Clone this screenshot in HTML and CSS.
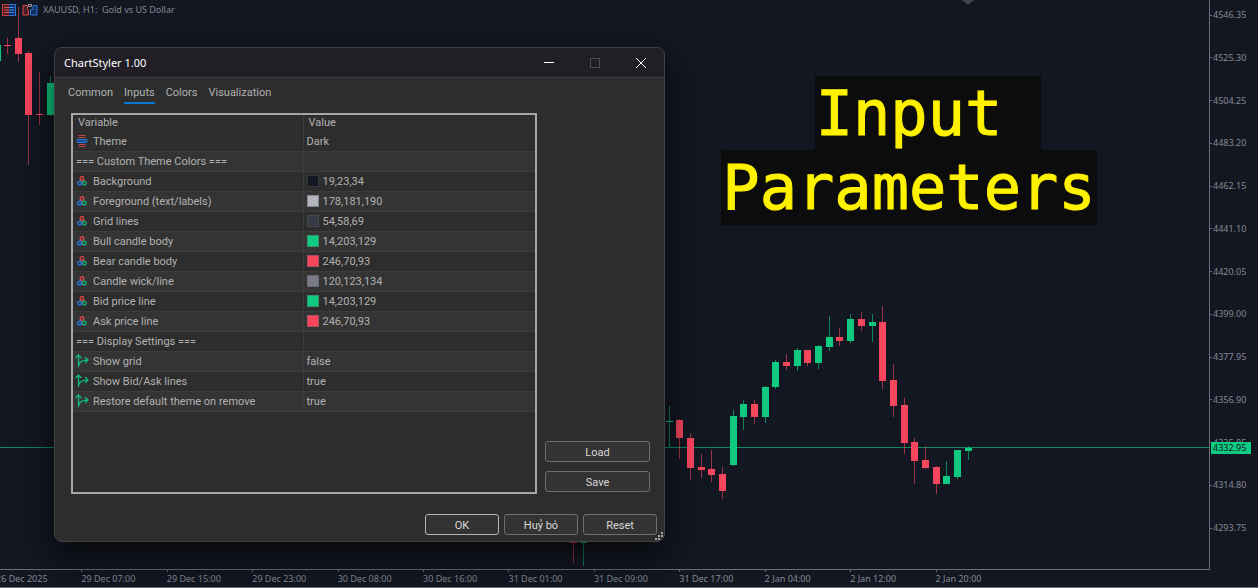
FILE: index.html
```html
<!DOCTYPE html>
<html lang="en">
<head>
    <meta charset="UTF-8">
    <meta name="viewport" content="width=device-width, initial-scale=1.0">
    <title>ChartStyler - Input Parameters</title>
    <link rel="stylesheet" href="styles.css">
</head>
<body>
    <main class="terminal">
        <section class="chart">
            <svg id="candles" viewBox="0 0 1209 569" preserveAspectRatio="none" aria-hidden="true">
                <line class="bid-line" x1="0" y1="447.5" x2="1209" y2="447.5"/>
                <path class="shift-mark" d="M962 0h12l-6 5z"/>
            </svg>
            <header class="chart-title">
                <svg width="16" height="12" viewBox="0 0 16 12" aria-hidden="true">
                    <path d="M8 .5H1.500v11H8" fill="#4a1f2b" stroke="#c9403f"/>
                    <path d="M8 .5h6.500v11H8" fill="#0f3060" stroke="#2f78d8"/>
                    <path d="M3 3.500h5M3 6h5M3 8.500h5" stroke="#e0524d"/>
                    <path d="M8 3.500h5M8 6h5M8 8.500h5" stroke="#3b8bee"/>
                </svg>
                <svg width="16" height="12" viewBox="0 0 16 12" aria-hidden="true">
                    <path d="M1 1.500h4.500v4l1 1.500v4H1z" fill="#4a1f2b" stroke="#d84a45"/>
                    <path d="M15 1.500h-4v4H8.500V11H15z" fill="#0f3060" stroke="#2f78d8"/>
                    <path d="M6.500.5h3v2h-3z" fill="none" stroke="#9a9ba3"/>
                </svg>
                <span>XAUUSD, H1:&nbsp; Gold vs US Dollar</span>
            </header>
            <h1 class="callout"><span>Input Parameters</span></h1>
        </section>

        <aside class="price-axis">
            <ul>
                <li>4546.35</li>
                <li>4525.30</li>
                <li>4504.25</li>
                <li>4483.20</li>
                <li>4462.15</li>
                <li>4441.10</li>
                <li>4420.05</li>
                <li>4399.00</li>
                <li>4377.95</li>
                <li>4356.90</li>
                <li>4335.85</li>
                <li>4314.80</li>
                <li>4293.75</li>
            </ul>
            <span class="bid-price">4332.95</span>
        </aside>

        <footer class="time-axis">
            <ul>
                <li>26 Dec 2025</li>
                <li>29 Dec 07:00</li>
                <li>29 Dec 15:00</li>
                <li>29 Dec 23:00</li>
                <li>30 Dec 08:00</li>
                <li>30 Dec 16:00</li>
                <li>31 Dec 01:00</li>
                <li>31 Dec 09:00</li>
                <li>31 Dec 17:00</li>
                <li>2 Jan 04:00</li>
                <li>2 Jan 12:00</li>
                <li>2 Jan 20:00</li>
            </ul>
        </footer>
    </main>

    <div class="dialog" role="dialog" aria-labelledby="dialog-title">
        <div class="titlebar">
            <h2 id="dialog-title">ChartStyler 1.00</h2>
            <button class="win-btn" aria-label="Minimize">
                <svg width="12" height="12" viewBox="0 0 12 12"><path d="M1 5.500h10"/></svg>
            </button>
            <button class="win-btn" aria-label="Maximize" disabled>
                <svg width="12" height="12" viewBox="0 0 12 12"><rect x="1.500" y="1.500" width="9" height="9"/></svg>
            </button>
            <button class="win-btn" aria-label="Close">
                <svg width="12" height="12" viewBox="0 0 12 12"><path d="M1 1l10 10M11 1L1 11"/></svg>
            </button>
        </div>

        <div class="tabs" role="tablist">
            <button role="tab">Common</button>
            <button role="tab" class="active" aria-selected="true">Inputs</button>
            <button role="tab">Colors</button>
            <button role="tab">Visualization</button>
        </div>

        <div class="content">
            <div class="inputs">
                <table>
                    <thead>
                        <tr><th>Variable</th><th>Value</th></tr>
                    </thead>
                    <tbody id="rows"></tbody>
                </table>
            </div>
            <div class="side">
                <button class="btn">Load</button>
                <button class="btn">Save</button>
            </div>
        </div>

        <div class="actions">
            <button class="btn default">OK</button>
            <button class="btn">Huỷ bỏ</button>
            <button class="btn">Reset</button>
        </div>
        <svg class="grip" width="8" height="8" viewBox="0 0 8 8" aria-hidden="true">
            <path d="M6 0h2v2H6zM3 3h2v2H3zM6 3h2v2H6zM0 6h2v2H0zM3 6h2v2H3z"/>
        </svg>
    </div>

    <script>
        const icons = {
            list: '<svg width="12" height="12" viewBox="0 0 12 12"><path d="M2.500.5h7M2.500 2.500h7M2.500 9.500h7M2.500 11.500h7" stroke="#c04848"/><rect x="1" y="4.500" width="10" height="3" rx="1" fill="#174a94" stroke="#2f78d8"/></svg>',
            color: '<svg width="10" height="10" viewBox="0 0 12 12" fill="none" stroke-width="1.700"><circle cx="6" cy="3" r="2.200" stroke="#d24747"/><circle cx="3.200" cy="8.500" r="2.200" stroke="#2a72d8"/><circle cx="8.800" cy="8.500" r="2.200" stroke="#18a875"/></svg>',
            bool: '<svg width="14" height="14" viewBox="0 0 14 14" fill="none" stroke="#10b87a" stroke-width="1.300"><path d="M3.500 13V1M.5 4l3-3 3 3M3.500 12C4 8 7 6 13 6M10 3l3 3-3 3"/></svg>'
        };

        const inputs = [
            ['list', 'Theme', 'Dark'],
            ['', '=== Custom Theme Colors ===', ''],
            ['color', 'Background', '19,23,34'],
            ['color', 'Foreground (text/labels)', '178,181,190'],
            ['color', 'Grid lines', '54,58,69'],
            ['color', 'Bull candle body', '14,203,129'],
            ['color', 'Bear candle body', '246,70,93'],
            ['color', 'Candle wick/line', '120,123,134'],
            ['color', 'Bid price line', '14,203,129'],
            ['color', 'Ask price line', '246,70,93'],
            ['', '=== Display Settings ===', ''],
            ['bool', 'Show grid', 'false'],
            ['bool', 'Show Bid/Ask lines', 'true'],
            ['bool', 'Restore default theme on remove', 'true']
        ];

        document.getElementById('rows').innerHTML = inputs.map(([type, name, value]) => {
            const icon = type ? `<i class="icon">${icons[type]}</i>` : '';
            const swatch = type === 'color' ? `<i class="swatch" style="background: rgb(${value})"></i>` : '';
            return `<tr><td><div class="cell">${icon}<span>${name}</span></div></td>
                <td><div class="cell">${swatch}<span>${value}</span></div></td></tr>`;
        }).join('');

        // x, high, body top, body bottom, low, bull
        const candles = [
            [-3, 40, 45, 61, 64, 1], [7, 38, 45, 46, 54, 0], [18, 7, 38, 54, 62, 0],
            [28, 51, 53, 115, 165, 0], [39, 72, 114, 115, 125, 0], [50, 76, 83, 115, 116, 1],
            [573, 530, 540, 543, 563, 0], [583, 530, 540, 543, 566, 1],
            [669, 406, 421, 422, 447, 1], [679, 419, 420, 438, 459, 0], [690, 433, 438, 468, 480, 0],
            [701, 454, 467, 470, 478, 0], [711, 450, 469, 475, 482, 0], [722, 467, 474, 491, 499, 0],
            [733, 410, 416, 465, 466, 1], [743, 400, 404, 417, 430, 1], [754, 400, 404, 417, 424, 0],
            [765, 386, 387, 417, 423, 1], [775, 360, 362, 387, 389, 1], [786, 354, 362, 366, 370, 0],
            [797, 348, 350, 366, 371, 1], [807, 350, 350, 363, 366, 0], [818, 345, 346, 363, 369, 1],
            [829, 316, 337, 347, 351, 1], [839, 328, 337, 341, 346, 0], [850, 314, 319, 341, 343, 1],
            [861, 312, 319, 326, 331, 0], [872, 314, 322, 326, 342, 1], [882, 306, 322, 381, 389, 0],
            [893, 364, 380, 406, 417, 0], [904, 398, 405, 443, 454, 0], [914, 438, 442, 461, 484, 0],
            [925, 446, 460, 468, 469, 0], [936, 466, 467, 484, 494, 0], [946, 461, 476, 484, 484, 1],
            [957, 450, 450, 477, 479, 1], [968, 446, 448, 451, 460, 1]
        ];

        document.getElementById('candles').innerHTML += candles.map(([x, high, top, bottom, low, bull]) =>
            `<g class="${bull ? 'bull' : 'bear'}">
                <rect class="wick" x="${x}" y="${high}" width="1" height="${low - high}"/>
                <rect x="${x - 3}" y="${top}" width="7" height="${bottom - top}"/>
            </g>`).join('');
    </script>
</body>
</html>
```
FILE: styles.css
```css
* {
    box-sizing: border-box;
}

body {
    margin: 0;
    background-color: #131722;
    color: #b2b2b2;
    font-family: Roboto, sans-serif;
    font-size: 11px;
}

ul {
    list-style: none;
    margin: 0;
    padding: 0;
}

button {
    font-family: inherit;
    font-size: inherit;
    padding: 0;
}

/* Chart window */
.terminal {
    display: grid;
    grid-template-columns: 1fr 48px;
    grid-template-rows: 1fr 18px;
    height: 100vh;
    overflow: hidden;
    color: #868993;
    font-family: 'Noto Sans', sans-serif;
    font-size: 9px;
    line-height: 14px;
}

.chart {
    position: relative;
    min-width: 0;
    min-height: 0;
    border-right: 1px solid #6b6e78;
    border-bottom: 1px solid #6b6e78;
}

#candles {
    position: absolute;
    width: 100%;
    height: 100%;
}

.bid-line {
    stroke: #0b8a5c;
}

.shift-mark {
    fill: #434651;
}

.bull {
    fill: #0ecb81;
}

.bear {
    fill: #f6465d;
}

.wick {
    opacity: 0.6;
}

.chart-title {
    position: relative;
    display: flex;
    align-items: center;
    gap: 4px;
    padding: 3px 1px;
}

.chart-title svg {
    fill: none;
    margin-right: 1px;
}

.callout {
    position: absolute;
    top: 77px;
    right: 111px;
    width: 378px;
    margin: 0;
    color: #fff200;
    font-family: 'DejaVu Sans Mono', monospace;
    font-size: 62px;
    font-weight: normal;
    line-height: 74px;
    text-align: center;
    white-space: pre-wrap;
    -webkit-text-stroke: 1px #fff200;
}

.callout span {
    background-color: #0c0c0c;
    padding: 1px;
    -webkit-box-decoration-break: clone;
    box-decoration-break: clone;
}

.price-axis {
    position: relative;
}

.price-axis ul {
    display: flex;
    flex-direction: column;
    justify-content: space-between;
    height: 100%;
    padding: 8px 0 35px;
}

.price-axis li {
    display: flex;
    align-items: center;
    gap: 1px;
}

.price-axis li::before {
    content: '';
    width: 2px;
    height: 1px;
    background-color: #6b6e78;
}

.bid-price {
    position: absolute;
    top: 78.600%;
    left: 1px;
    right: 7px;
    height: 12px;
    transform: translateY(-50%);
    background-color: #0ecb81;
    color: #131722;
    line-height: 12px;
    padding-left: 2px;
}

.time-axis {
    grid-column: 1 / -1;
    border-bottom: 1px solid #6b6e78;
}

.time-axis ul {
    display: grid;
    grid-template-columns: repeat(12, 1fr);
    margin-left: -4px;
    margin-right: 237px;
}

.time-axis li {
    white-space: nowrap;
}

.time-axis li::before {
    content: '';
    display: block;
    width: 1px;
    height: 2px;
    background-color: #6b6e78;
}

/* Dialog window */
.dialog {
    position: absolute;
    top: 47px;
    left: 54px;
    width: 611px;
    background-color: #2d2d2d;
    border: 1px solid #414143;
    border-radius: 8px;
    box-shadow: 0 14px 36px rgba(0, 0, 0, 0.7);
    overflow: hidden;
}

.titlebar {
    display: flex;
    height: 30px;
    padding-left: 9px;
    background-color: #221e26;
    border-bottom: 1px solid #3f3d40;
}

.titlebar h2 {
    flex: 1;
    margin: 0;
    color: #fff;
    font-family: 'Noto Sans', sans-serif;
    font-size: 11px;
    font-weight: normal;
    line-height: 29px;
}

.win-btn {
    display: flex;
    align-items: center;
    justify-content: center;
    width: 46px;
    border: none;
    background: none;
}

.win-btn svg {
    fill: none;
    stroke: #fff;
}

.win-btn:disabled svg {
    stroke: #4c484f;
}

.tabs {
    display: flex;
    gap: 11px;
    padding: 6px 13px 9px;
}

.tabs button {
    height: 20px;
    border: none;
    border-bottom: 2px solid transparent;
    background: none;
    color: #b2b2b2;
    padding-bottom: 2px;
}

.tabs .active {
    border-bottom-color: #0078d4;
}

.content {
    display: flex;
    gap: 8px;
    padding: 0 14px 0 16px;
}

.inputs {
    flex: 1;
    height: 381px;
    border: 2px solid #a6a6a6;
    overflow: auto;
}

table {
    width: 100%;
    table-layout: fixed;
    border-collapse: collapse;
}

th,
td {
    height: 20px;
    padding: 0 3px;
    border-right: 1px solid #3c3c3c;
    border-bottom: 1px solid #3c3c3c;
    line-height: 16px;
    text-align: left;
}

th {
    height: 16px;
    padding: 0 5px;
    border-bottom: none;
    font-weight: normal;
}

th:first-child {
    width: 230px;
}

th:last-child,
td:last-child {
    border-right: none;
}

tbody tr:nth-child(even) {
    background-color: #343434;
}

.cell {
    display: flex;
    align-items: center;
    gap: 4px;
}

.cell span {
    padding-top: 2px;
}

.icon,
.icon svg {
    display: block;
}

.icon {
    display: flex;
    justify-content: center;
    width: 14px;
    margin-left: -1px;
}

.icon svg {
    flex: none;
}

.swatch {
    width: 12px;
    height: 12px;
    border: 1px solid rgba(90, 90, 90, 0.5);
}

.side {
    display: flex;
    flex-direction: column;
    justify-content: flex-end;
    gap: 9px;
    width: 105px;
    padding-bottom: 2px;
}

.btn {
    height: 21px;
    padding-top: 1px;
    border: 1px solid #6e6e6e;
    border-radius: 3px;
    background-color: #333;
    color: #d8d8d8;
}

.btn:hover {
    background-color: #3d3d3d;
}

.btn.default {
    border-color: #b4b4b4;
}

.actions {
    display: flex;
    justify-content: flex-end;
    gap: 5px;
    padding: 20px 7px 6px;
}

.actions .btn {
    width: 74px;
}

.grip {
    position: absolute;
    right: 1px;
    bottom: 1px;
    fill: #a8a8a8;
}
```
